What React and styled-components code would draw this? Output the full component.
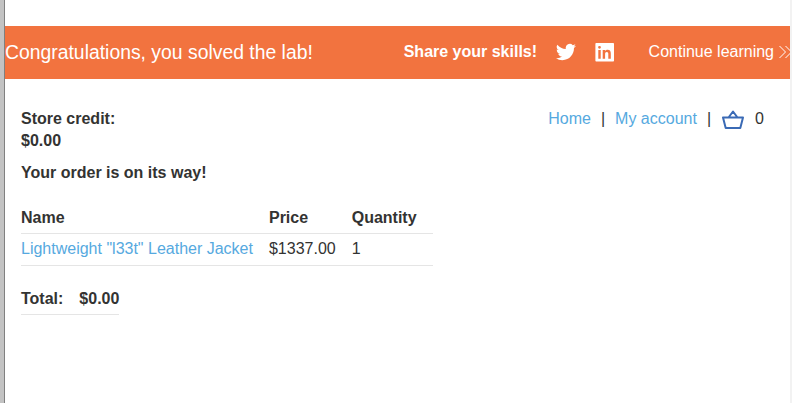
import React from "react";
import styled, { createGlobalStyle } from "styled-components";

const GlobalStyle = createGlobalStyle`
  *, *::before, *::after { box-sizing: border-box; }
  body {
    margin: 0;
    background: #fff;
    color: #333332;
    font-family: "Liberation Sans", Arial, sans-serif;
    font-size: 16px;
    line-height: 22px;
    overflow: hidden;
  }
`;

const Window = styled.div`
  width: 100%;
  height: 100vh;
  padding-top: 26px;
  background: #fff;
  border-left: 4px solid #c3c3c3;
  border-right: 2px solid #f2f2f2;
  box-shadow: inset 1px 0 #808080;
`;

const Banner = styled.section`
  display: flex;
  align-items: center;
  height: 53px;
  margin-left: 1px;
  padding-bottom: 1px;
  background: #f2733f;
  color: #fff;
  white-space: nowrap;
  overflow: hidden;
`;

const BannerTitle = styled.h4`
  flex: none;
  width: 398.7px;
  margin: 0;
  font-size: 19.36px;
  font-weight: 400;
`;

const ShareLabel = styled.span`
  flex: none;
  width: 152px;
  font-weight: 700;
`;

const SocialIcon = styled.svg`
  flex: none;
  display: block;
  width: 20px;
  height: 20px;
  margin-right: ${(p) => p.$gap}px;
  fill: #fff;
`;

const ContinueLink = styled.a`
  flex: none;
  display: flex;
  align-items: center;
  gap: 5px;
  color: #fff;
`;

const Chevrons = styled.svg`
  display: block;
  width: 14px;
  height: 14px;
  fill: none;
  stroke: #fff;
  stroke-width: 1;
`;

const Header = styled.header`
  display: flex;
  justify-content: space-between;
  padding: 29px 26px 0 17px;
`;

const StoreCredit = styled.div`
  width: 120px;
  font-weight: 700;
`;

const Nav = styled.nav`
  display: flex;
  height: 22px;
`;

const Link = styled.a`
  color: #56a9e0;
`;

const Separator = styled.span`
  width: 24.2px;
  text-align: center;
`;

const BasketIcon = styled.svg`
  display: block;
  width: 22px;
  height: 20px;
  margin: 2px 11px 0 1px;
  fill: none;
  stroke: #3a6ab5;
  stroke-width: 2;
  stroke-linejoin: round;
`;

const Content = styled.main`
  padding: 10px 17px 0;
`;

const OrderMessage = styled.strong`
  display: block;
  margin-bottom: 18px;
`;

const Table = styled.table`
  border-collapse: separate;
  border-spacing: 0;
  margin-bottom: ${(p) => p.$gap || 0}px;
  white-space: nowrap;

  th, td {
    height: 32px;
    padding: 0 16px 1px 0;
    border-bottom: 1px solid #e5e5e5;
    text-align: left;
    vertical-align: middle;
  }

  th {
    padding-top: 1px;
    padding-bottom: 0;
  }
`;

const TotalTable = styled(Table)`
  th:last-child { padding-right: 0; }
`;

export default function App() {
  return (
    <>
      <GlobalStyle />
      <Window>
        <Banner>
          <BannerTitle>Congratulations, you solved the lab!</BannerTitle>
          <ShareLabel>Share your skills!</ShareLabel>
          <SocialIcon $gap={19.3} viewBox="0 0 24 24">
            <path d="M23.95 4.57a10 10 0 0 1-2.82.77 4.96 4.96 0 0 0 2.16-2.72c-.95.55-2 .96-3.13 1.18a4.92 4.92 0 0 0-8.38 4.48C7.69 8.1 4.07 6.13 1.64 3.16a4.92 4.92 0 0 0 1.52 6.57 4.9 4.9 0 0 1-2.23-.61v.06a4.92 4.92 0 0 0 3.95 4.83 5 5 0 0 1-2.21.08 4.94 4.94 0 0 0 4.6 3.42A9.87 9.87 0 0 1 0 19.54a13.99 13.99 0 0 0 7.56 2.21c9.05 0 14-7.5 14-13.98 0-.21 0-.42-.02-.63a9.94 9.94 0 0 0 2.46-2.55z" />
          </SocialIcon>
          <SocialIcon $gap={33.6} viewBox="0 0 20 20">
            <path
              fillRule="evenodd"
              d="M1.2 1h17a.8.8 0 0 1 .8.8v17a.8.8 0 0 1-.8.8h-17a.8.8 0 0 1-.8-.8v-17a.8.8 0 0 1 .8-.8zM3.300 8v8.700h2.400V8zM4.500 3.900a1.400 1.400 0 1 0 0 2.800 1.400 1.400 0 1 0 0-2.800zM7.700 8v8.700h2.400v-4.400c0-1.300.5-2.200 1.700-2.200 1.300 0 1.500 1 1.500 2.200v4.400h2.500v-4.900c0-2.500-.7-4-3.200-4-1.200 0-2.100.6-2.500 1.300V8z"
            />
          </SocialIcon>
          <ContinueLink>
            Continue learning
            <Chevrons viewBox="0 0 14 14">
              <path d="M.5 1 6.500 7l-6 6M6.500 1l6 6-6 6" />
            </Chevrons>
          </ContinueLink>
        </Banner>
        <Header>
          <StoreCredit>
            Store credit:
            <br />
            $0.00
          </StoreCredit>
          <Nav>
            <Link>Home</Link>
            <Separator>|</Separator>
            <Link>My account</Link>
            <Separator>|</Separator>
            <BasketIcon viewBox="0 0 22 20">
              <path d="M1 7.500h20L18.300 18H3.700zM6.500 7.500 11 1.500l4.500 6" />
            </BasketIcon>
            <span>0</span>
          </Nav>
        </Header>
        <Content>
          <OrderMessage>Your order is on its way!</OrderMessage>
          <Table $gap={17}>
            <thead>
              <tr>
                <th>Name</th>
                <th>Price</th>
                <th>Quantity</th>
              </tr>
            </thead>
            <tbody>
              <tr>
                <td><Link>Lightweight "l33t" Leather Jacket</Link></td>
                <td>$1337.00</td>
                <td>1</td>
              </tr>
            </tbody>
          </Table>
          <TotalTable>
            <tbody>
              <tr>
                <th>Total:</th>
                <th>$0.00</th>
              </tr>
            </tbody>
          </TotalTable>
        </Content>
      </Window>
    </>
  );
}
